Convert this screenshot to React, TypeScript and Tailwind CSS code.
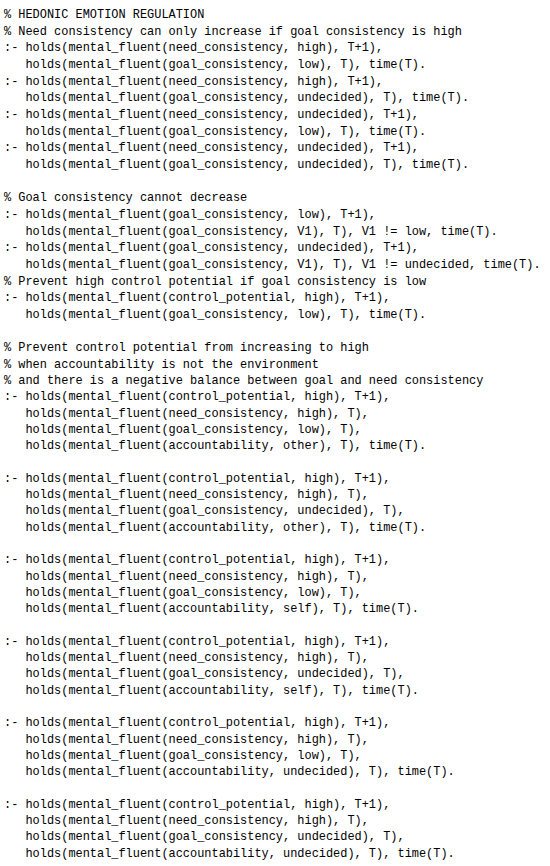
const top = `% HEDONIC EMOTION REGULATION
% Need consistency can only increase if goal consistency is high
:- holds(mental_fluent(need_consistency, high), T+1),
   holds(mental_fluent(goal_consistency, low), T), time(T).
:- holds(mental_fluent(need_consistency, high), T+1),
   holds(mental_fluent(goal_consistency, undecided), T), time(T).
:- holds(mental_fluent(need_consistency, undecided), T+1),
   holds(mental_fluent(goal_consistency, low), T), time(T).
:- holds(mental_fluent(need_consistency, undecided), T+1),
   holds(mental_fluent(goal_consistency, undecided), T), time(T).

% Goal consistency cannot decrease
:- holds(mental_fluent(goal_consistency, low), T+1),
   holds(mental_fluent(goal_consistency, V1), T), V1 != low, time(T).
:- holds(mental_fluent(goal_consistency, undecided), T+1),
   holds(mental_fluent(goal_consistency, V1), T), V1 != undecided, time(T).
% Prevent high control potential if goal consistency is low
:- holds(mental_fluent(control_potential, high), T+1),
   holds(mental_fluent(goal_consistency, low), T), time(T).`;

const bottom = `% Prevent control potential from increasing to high
% when accountability is not the environment
% and there is a negative balance between goal and need consistency
:- holds(mental_fluent(control_potential, high), T+1),
   holds(mental_fluent(need_consistency, high), T),
   holds(mental_fluent(goal_consistency, low), T),
   holds(mental_fluent(accountability, other), T), time(T).

:- holds(mental_fluent(control_potential, high), T+1),
   holds(mental_fluent(need_consistency, high), T),
   holds(mental_fluent(goal_consistency, undecided), T),
   holds(mental_fluent(accountability, other), T), time(T).

:- holds(mental_fluent(control_potential, high), T+1),
   holds(mental_fluent(need_consistency, high), T),
   holds(mental_fluent(goal_consistency, low), T),
   holds(mental_fluent(accountability, self), T), time(T).

:- holds(mental_fluent(control_potential, high), T+1),
   holds(mental_fluent(need_consistency, high), T),
   holds(mental_fluent(goal_consistency, undecided), T),
   holds(mental_fluent(accountability, self), T), time(T).

:- holds(mental_fluent(control_potential, high), T+1),
   holds(mental_fluent(need_consistency, high), T),
   holds(mental_fluent(goal_consistency, low), T),
   holds(mental_fluent(accountability, undecided), T), time(T).

:- holds(mental_fluent(control_potential, high), T+1),
   holds(mental_fluent(need_consistency, high), T),
   holds(mental_fluent(goal_consistency, undecided), T),
   holds(mental_fluent(accountability, undecided), T), time(T).`;

export default function App() {
  return (
    <main className="min-h-screen bg-white pl-[4px] pt-[7px] font-['Liberation_Mono',monospace] text-[11.93px] text-black">
      {/* two blocks: the source spacing differs a little between them */}
      <pre className="mb-[16.67px] whitespace-pre font-['Liberation_Mono',monospace] leading-[16.67px]">{top}</pre>
      <pre className="whitespace-pre font-['Liberation_Mono',monospace] leading-[16.29px]">{bottom}</pre>
    </main>
  );
}
